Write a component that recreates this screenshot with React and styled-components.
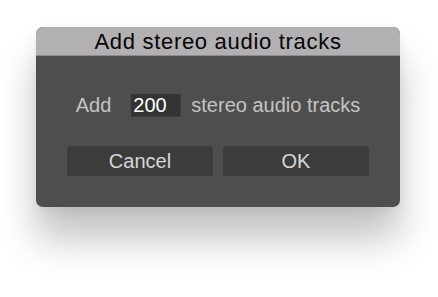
import React, {useState} from "react";
import styled, {createGlobalStyle} from "styled-components";

const GlobalStyle = createGlobalStyle`
  html, body {
    margin: 0;
    padding: 0;
    background: #ffffff;
  }
  body {
    font-family: "Liberation Sans", Arial, sans-serif;
  }
`

const Page = styled.div`
  width: 438px;
  height: 297px;
  padding: 27px 0 0 36px;
  box-sizing: border-box;
`

const Dialog = styled.div`
  width: 364px;
  height: 180px;
  border-radius: 7px;
  background: #4e4e4e;
  overflow: hidden;
  display: flex;
  flex-direction: column;
  box-shadow: 0 32px 38px rgba(0, 0, 0, 0.24), 0 4px 12px rgba(0, 0, 0, 0.06);
`

const TitleBar = styled.div`
  height: 27px;
  background: #b2b0b2;
  border-bottom: 1px solid #8e8c8e;
  display: flex;
  align-items: center;
  justify-content: center;
  font-size: 22px;
  letter-spacing: 0.7px;
  color: #050505;
  padding-top: 1px;
`

const Body = styled.div`
  flex: 1;
  display: flex;
  flex-direction: column;
  align-items: center;
  padding-top: 38px;
  gap: 29px;
`

const Row = styled.div`
  display: flex;
  align-items: center;
  gap: ${({gap}) => gap || 10}px;
  font-size: 20px;
  color: #c4c4c4;
`

const Label = styled.span`
  margin: ${({margin}) => margin || 0};
`

const NumberInput = styled.input`
  width: 50px;
  height: 23px;
  box-sizing: border-box;
  background: #333333;
  border: none;
  border-right: 1px solid #3e3e3e;
  border-bottom: 1px solid #3e3e3e;
  color: #ffffff;
  font-family: "Liberation Sans", Arial, sans-serif;
  font-size: 20px;
  padding: 0 0 0 2px;
  outline: none;
`

const Button = styled.button`
  width: 146px;
  height: 30px;
  border: none;
  border-radius: 3px;
  background: #3c3c3c;
  color: #d6d6d6;
  font-family: "Liberation Sans", Arial, sans-serif;
  font-size: 20px;
  padding: 0;
  cursor: pointer;
`

export default function App() {
    const [count, setCount] = useState("200")

    return (
        <>
            <GlobalStyle/>
            <Page>
                <Dialog>
                    <TitleBar>Add stereo audio tracks</TitleBar>
                    <Body>
                        <Row>
                            <Label margin="0 10px 0 0">Add</Label>
                            <NumberInput value={count} onChange={e => setCount(e.target.value)}/>
                            <Label>stereo audio tracks</Label>
                        </Row>
                        <Row gap={10}>
                            <Button>Cancel</Button>
                            <Button>OK</Button>
                        </Row>
                    </Body>
                </Dialog>
            </Page>
        </>
    );
}
